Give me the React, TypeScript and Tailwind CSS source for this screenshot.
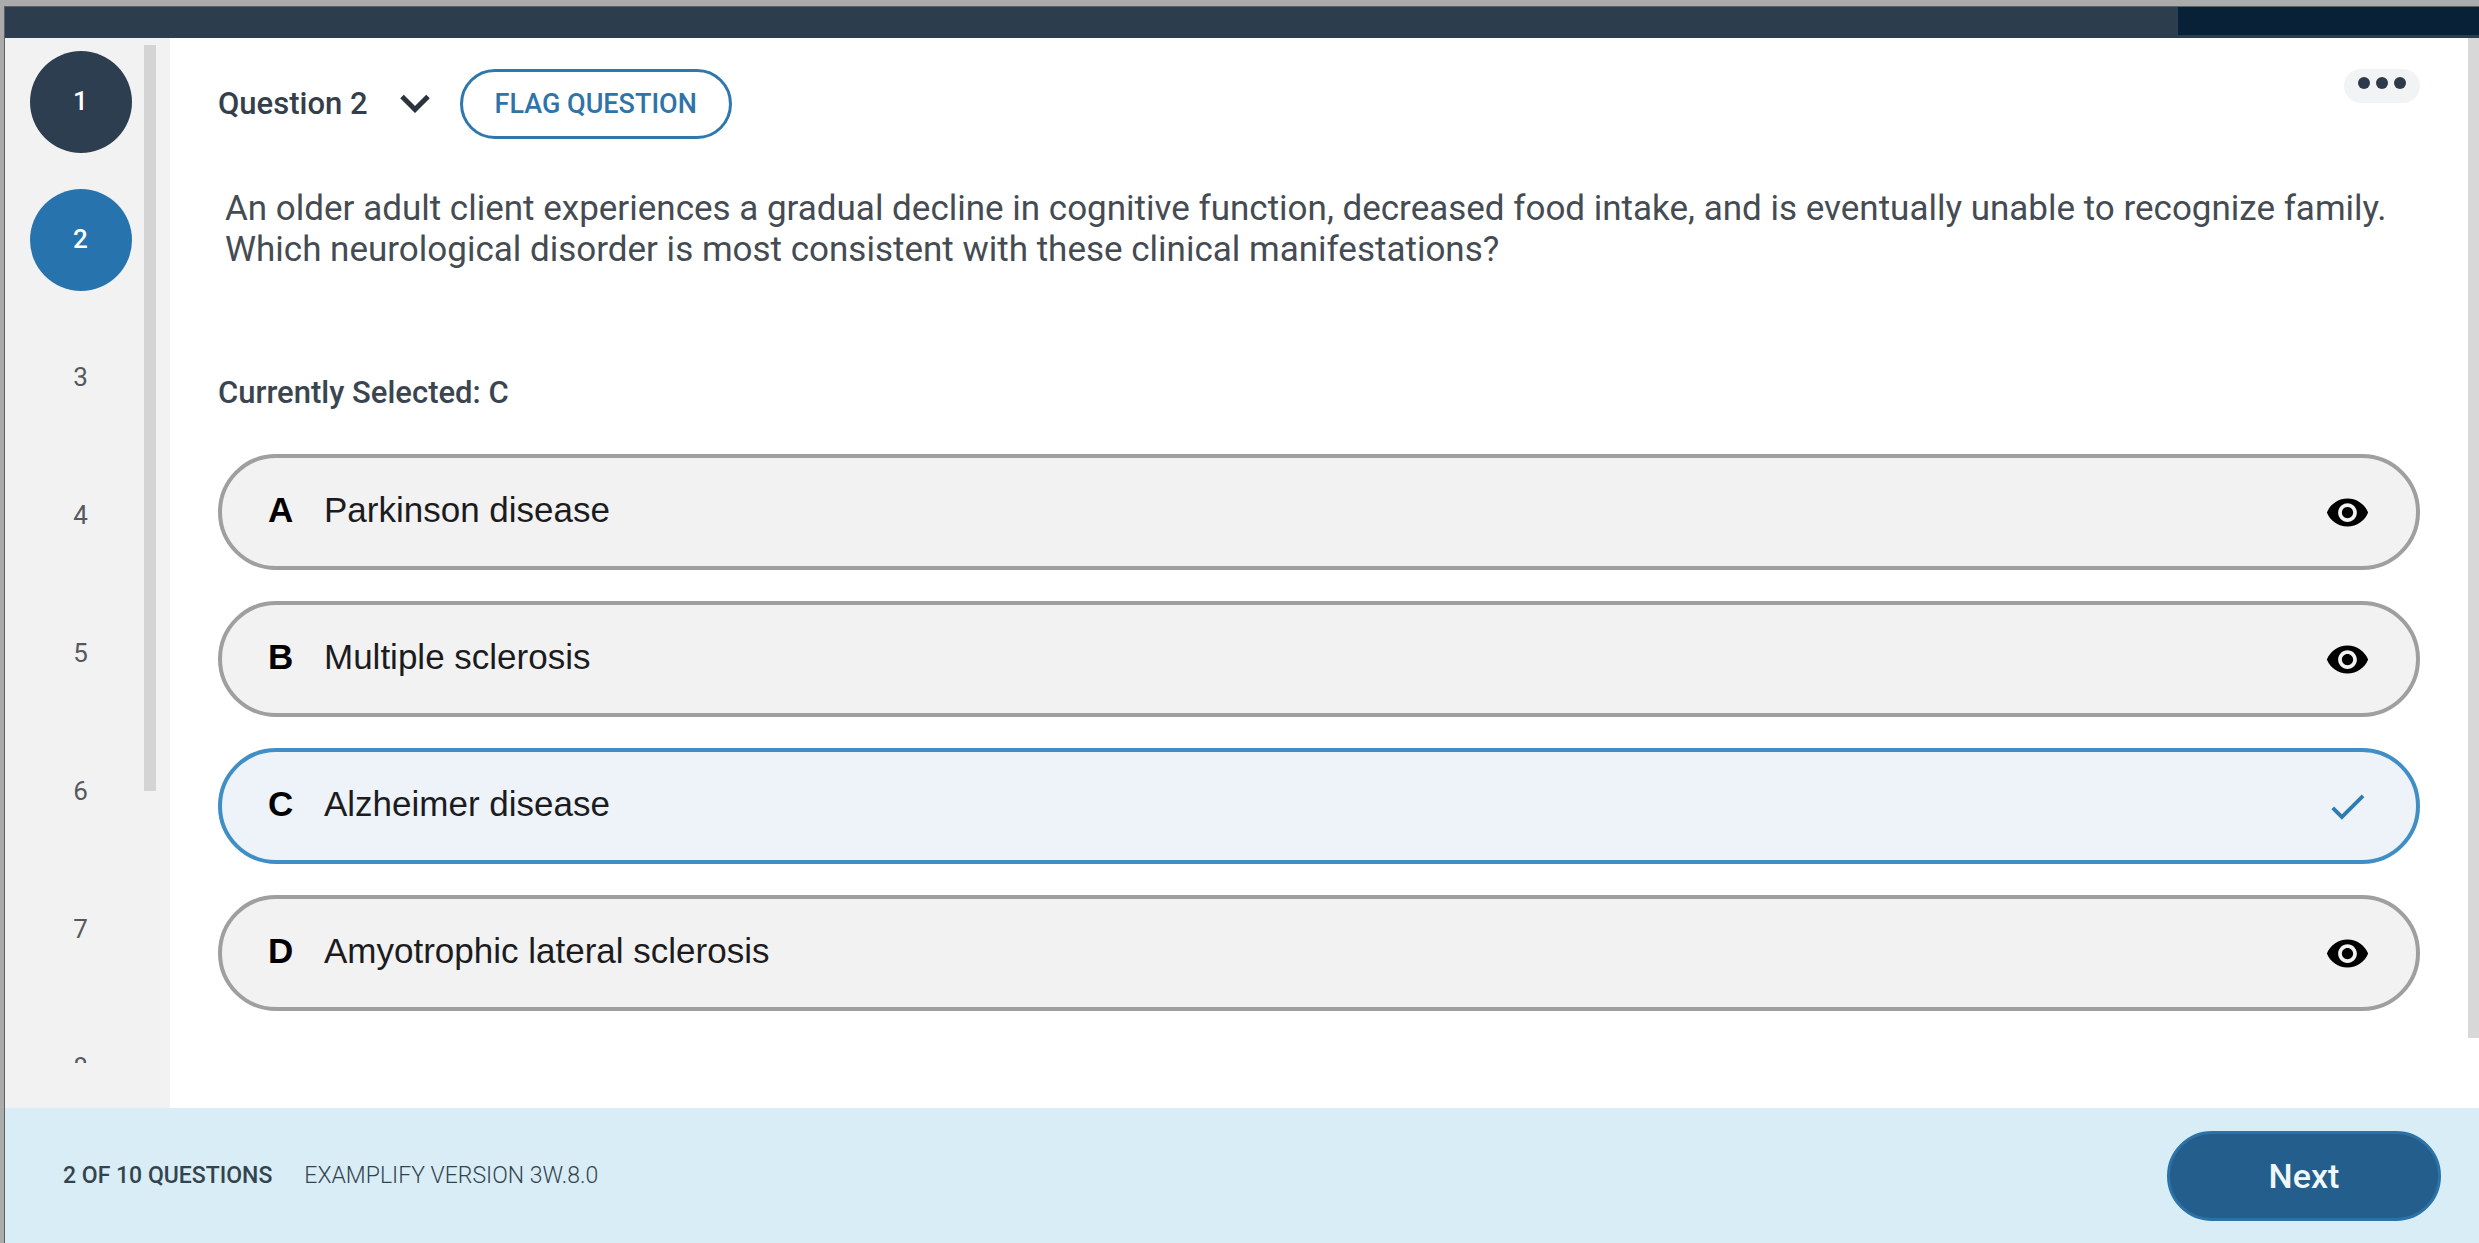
import { useState } from "react";
import { MdCheck, MdVisibility } from "react-icons/md";

interface Option {
  letter: string;
  text: string;
}

const OPTIONS: Option[] = [
  { letter: "A", text: "Parkinson disease" },
  { letter: "B", text: "Multiple sclerosis" },
  { letter: "C", text: "Alzheimer disease" },
  { letter: "D", text: "Amyotrophic lateral sclerosis" },
];

const QUESTIONS = [1, 2, 3, 4, 5, 6, 7, 8];

function questionClass(n: number, current: number) {
  if (n === current) return "bg-[#2773ae] text-white font-medium";
  if (n < current) return "bg-[#2c3e4f] text-white font-medium";
  return "text-[#55595e]";
}

function QuestionNav({ current }: { current: number }) {
  return (
    <nav aria-label="Questions" className="flex w-[165px] shrink-0 bg-[#f2f2f2] pb-[45px]">
      <div className="flex min-h-0 flex-1 flex-col items-center gap-[36px] overflow-hidden pt-[13px] pl-[12px]">
        {QUESTIONS.map((n) => (
          <button
            key={n}
            type="button"
            className={`size-[102px] shrink-0 rounded-full pb-[3px] text-[26px] leading-none ${questionClass(n, current)}`}
          >
            {n}
          </button>
        ))}
      </div>
      <div className="mt-[7px] mr-[14px] h-[746px] w-[12px] bg-[#d4d4d4]" />
    </nav>
  );
}

function OptionRow({ option, selected, onSelect }: { option: Option; selected: boolean; onSelect: () => void }) {
  return (
    <div
      className={`flex h-[116px] items-center rounded-full border-4 pr-[46px] ${
        selected ? "border-[#3f8fc6] bg-[#edf3f8]" : "border-[#9f9f9f] bg-[#f2f2f2]"
      }`}
    >
      <label className="flex h-full flex-1 cursor-pointer items-center pl-[46px] pb-[4px] font-['Liberation_Sans',sans-serif] text-[35px] leading-[40px] text-[#1c1c1e]">
        <input type="radio" name="answer" checked={selected} onChange={onSelect} className="sr-only" />
        <span className="w-[56px] font-bold text-black">{option.letter}</span>
        {option.text}
      </label>
      {selected ? (
        <MdCheck size={45} className="text-[#2d7bb0]" />
      ) : (
        <button type="button" aria-label={`Hide option ${option.letter}`}>
          <MdVisibility size={45} className="text-black" />
        </button>
      )}
    </div>
  );
}

export default function App() {
  const [selected, setSelected] = useState("C");

  return (
    <div className="flex h-screen flex-col border-t-[6px] border-l-[4px] border-[#ababab] bg-white font-[Roboto,sans-serif]">
      <div className="flex min-h-0 flex-1 flex-col border-t border-l border-[#5c6064]">
        <header className="flex h-[31px] shrink-0 justify-end bg-[#2c3e4e] pb-[3px]">
          <div className="w-[301px] bg-[#082136]" />
        </header>

        <div className="flex min-h-0 flex-1">
          <QuestionNav current={2} />

          <main className="min-w-0 flex-1 overflow-hidden pt-[31px] pr-[48px] pl-[48px]">
            <div className="flex items-start justify-between">
              <div className="flex items-center">
                <button type="button" className="flex items-center gap-[32px] text-[31px] font-medium text-[#353f4b]">
                  Question 2
                  <svg width="30" height="20" viewBox="0 0 30 20" fill="none" stroke="#2b333d" strokeWidth="5">
                    <path d="M2 2.5 15 15.5 28 2.5" />
                  </svg>
                </button>
                <button
                  type="button"
                  className="ml-[30px] h-[70px] rounded-full border-[3px] border-[#2f78ae] px-[32px] text-[27px] font-medium text-[#2f74a8]"
                >
                  FLAG QUESTION
                </button>
              </div>
              <button
                type="button"
                aria-label="More options"
                className="flex h-[34px] w-[76px] justify-center gap-[6px] rounded-full bg-[#f2f3f4] pt-[8px]"
              >
                <span className="size-[12px] rounded-full bg-[#2c3a4a]" />
                <span className="size-[12px] rounded-full bg-[#2c3a4a]" />
                <span className="size-[12px] rounded-full bg-[#2c3a4a]" />
              </button>
            </div>

            <p className="mt-[49px] pl-[7px] text-[35px] leading-[41px] text-[#454b52]">
              An older adult client experiences a gradual decline in cognitive function, decreased food intake, and is
              eventually unable to recognize family.
              <br />
              Which neurological disorder is most consistent with these clinical manifestations?
            </p>

            <p className="mt-[103px] text-[31px] leading-[40px] font-medium text-[#3b4550]">
              Currently Selected: {selected}
            </p>

            <div role="radiogroup" aria-label="Answers" className="mt-[41px] flex flex-col gap-[31px]">
              {OPTIONS.map((o) => (
                <OptionRow
                  key={o.letter}
                  option={o}
                  selected={o.letter === selected}
                  onSelect={() => setSelected(o.letter)}
                />
              ))}
            </div>
          </main>

          <div className="h-[1000px] w-[11px] shrink-0 bg-[#d8d8d8]" />
        </div>

        <footer className="flex h-[135px] shrink-0 items-center justify-between bg-[#d9edf6] pr-[38px] pl-[58px]">
          <div className="flex gap-[32px] pt-[2px] text-[23px] text-[#33444f]">
            <span className="font-medium">2 OF 10 QUESTIONS</span>
            <span className="font-light">EXAMPLIFY VERSION 3W.8.0</span>
          </div>
          <button
            type="button"
            className="h-[90px] w-[274px] rounded-full border-[3px] border-[#2a72a8] bg-[#235e8c] pt-[2px] text-[34px] font-medium text-[#f0f7fb]"
          >
            Next
          </button>
        </footer>
      </div>
    </div>
  );
}
